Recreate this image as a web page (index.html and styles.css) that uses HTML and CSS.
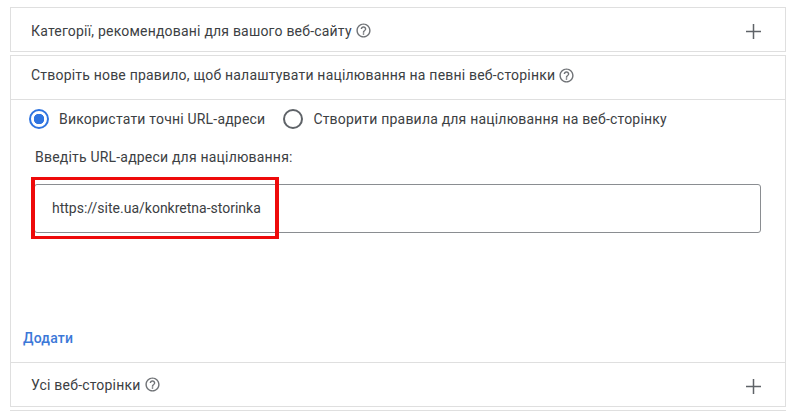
FILE: index.html
```html
<!DOCTYPE html>
<html lang="uk">
<head>
<meta charset="utf-8">
<title>Націлювання</title>
<link rel="stylesheet" href="styles.css">
</head>
<body>
<div class="frame">
  <div class="row bar">
    <span class="label">Категорії, рекомендовані для вашого веб-сайту</span>
    <svg class="help" viewBox="0 0 24 24"><path d="M11 18h2v-2h-2v2zm1-16C6.48 2 2 6.48 2 12s4.48 10 10 10 10-4.48 10-10S17.52 2 12 2zm0 18c-4.41 0-8-3.59-8-8s3.59-8 8-8 8 3.59 8 8-3.59 8-8 8zm0-14c-2.21 0-4 1.79-4 4h2c0-1.1.9-2 2-2s2 .9 2 2c0 2-3 1.75-3 5h2c0-2.25 3-2.5 3-5 0-2.21-1.79-4-4-4z"/></svg>
    <svg class="plus" viewBox="0 0 16 16"><path d="M7.2 0h1.6v7.2H16v1.6H8.8V16H7.2V8.8H0V7.2h7.2z"/></svg>
  </div>
  <section class="panel">
    <div class="row head">
      <span class="label">Створіть нове правило, щоб налаштувати націлювання на певні веб-сторінки</span>
      <svg class="help" viewBox="0 0 24 24"><path d="M11 18h2v-2h-2v2zm1-16C6.48 2 2 6.48 2 12s4.48 10 10 10 10-4.48 10-10S17.52 2 12 2zm0 18c-4.41 0-8-3.59-8-8s3.59-8 8-8 8 3.59 8 8-3.59 8-8 8zm0-14c-2.21 0-4 1.79-4 4h2c0-1.1.9-2 2-2s2 .9 2 2c0 2-3 1.75-3 5h2c0-2.25 3-2.5 3-5 0-2.21-1.79-4-4-4z"/></svg>
    </div>
    <div class="radios">
      <span class="radio on"></span><span class="label first">Використати точні URL-адреси</span>
      <span class="radio"></span><span class="label">Створити правила для націлювання на веб-сторінку</span>
    </div>
    <div class="prompt label">Введіть URL-адреси для націлювання:</div>
    <div class="field">https://site.ua/konkretna-storinka<span class="mark"></span></div>
    <a class="add label">Додати</a>
  </section>
  <div class="row bar last">
    <span class="label">Усі веб-сторінки</span>
    <svg class="help" viewBox="0 0 24 24"><path d="M11 18h2v-2h-2v2zm1-16C6.48 2 2 6.48 2 12s4.48 10 10 10 10-4.48 10-10S17.52 2 12 2zm0 18c-4.41 0-8-3.59-8-8s3.59-8 8-8 8 3.59 8 8-3.59 8-8 8zm0-14c-2.21 0-4 1.79-4 4h2c0-1.1.9-2 2-2s2 .9 2 2c0 2-3 1.75-3 5h2c0-2.25 3-2.5 3-5 0-2.21-1.79-4-4-4z"/></svg>
    <svg class="plus" viewBox="0 0 16 16"><path d="M7.2 0h1.6v7.2H16v1.6H8.8V16H7.2V8.8H0V7.2h7.2z"/></svg>
  </div>
  <div class="tail"></div>
</div>
</body>
</html>
```
FILE: styles.css
```css
html, body {
  margin: 0;
  padding: 0;
  background: #fff;
}
body {
  font-family: Roboto, "Liberation Sans", sans-serif;
  font-size: 14px;
  color: #3c4043;
  overflow: hidden;
}
.frame {
  box-sizing: border-box;
  width: 776px;
  margin: 7px 0 0 10px;
}
.row {
  display: flex;
  align-items: center;
  box-sizing: border-box;
  height: 45px;
  padding: 2px 24px 0 20px;
}
.bar {
  border: 1px solid #dfdfdf;
}
.last {
  border-top: 0;
  height: 44px;
  padding-top: 0;
}
.head {
  height: 44px;
  padding-top: 0;
  padding-bottom: 5px;
  border-bottom: 1px solid #dfdfdf;
}
.label {
  line-height: 20px;
  letter-spacing: 0.2px;
}
.help {
  width: 17px;
  height: 17px;
  margin-left: 3px;
  fill: #6f7276;
}
.plus {
  width: 15px;
  height: 15px;
  margin: 2px 0 0 auto;
  fill: #5f6368;
}
.last .plus {
  margin-top: 3px;
}
.panel {
  margin-top: 3px;
  border: 1px solid #dfdfdf;
  height: 308px;
  box-sizing: border-box;
}
.radios {
  display: flex;
  align-items: center;
  height: 20px;
  margin-top: 9px;
  padding-left: 18px;
}
.radio {
  box-sizing: border-box;
  width: 20px;
  height: 20px;
  border: 2px solid #5f6368;
  border-radius: 50%;
  margin-right: 10px;
}
.radio.on {
  border-color: #2f74e0;
  background: radial-gradient(circle, #2f74e0 0 5px, #fff 5.5px);
}
.first {
  margin-right: 18px;
}
.prompt {
  margin: 18px 0 0 24px;
}
.field {
  position: relative;
  box-sizing: border-box;
  width: 727px;
  height: 49px;
  margin: 17px 0 0 23px;
  padding-left: 17px;
  border: 1px solid #8a8d91;
  border-radius: 3px;
  line-height: 47px;
}
.mark {
  position: absolute;
  left: -4px;
  top: -8px;
  width: 248px;
  height: 62px;
  box-sizing: border-box;
  border: solid #ee0a0a;
  border-width: 3px 4px;
}
.add {
  display: block;
  margin: 95px 0 0 12px;
  font-weight: 500;
  color: #3b78d8;
}
.tail {
  height: 1px;
  margin-top: 3px;
  background: #dfdfdf;
}
```
